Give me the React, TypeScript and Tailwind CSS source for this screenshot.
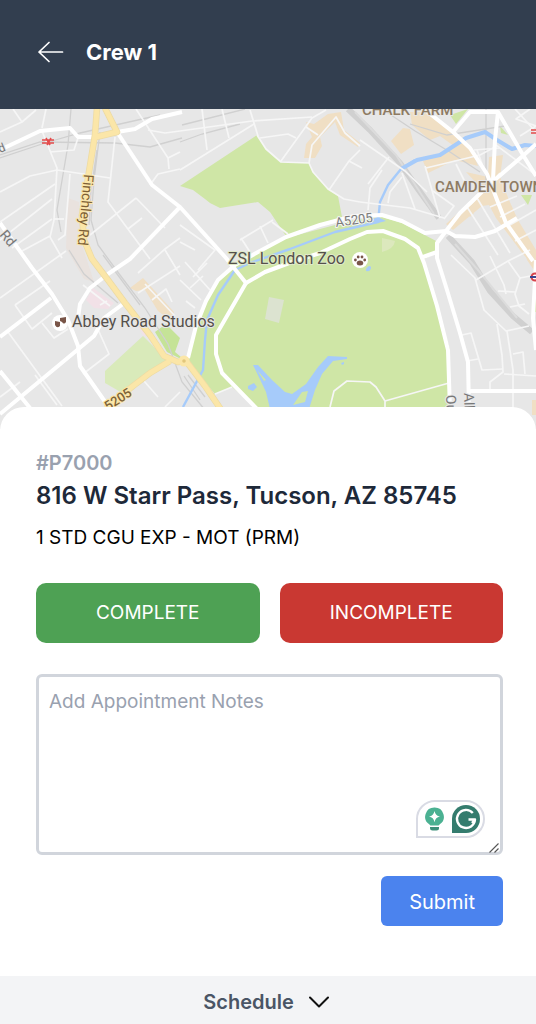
import { useState } from "react";

const minorRoads = [
  "M13 109 L22 122 L0 132", "M22 122 L36 110", "M46 109 L42 128", "M42 131 L57 168 L54 220 L50 237 L62 258",
  "M50 152 L74 150 L78 138", "M0 192 L30 176 L57 170 L110 178", "M0 222 L55 184", "M0 240 L52 199", "M12 248 L52 219",
  "M70 174 L65 235 L58 240", "M54 219 L64 219", "M115 137 L108 202 L150 259", "M90 235 L136 198", "M128 229 L142 218",
  "M136 198 L165 228", "M22 251 L50 236", "M136 109 L168 158 L169 169", "M168 158 L180 152", "M150 185 L158 174 L180 169",
  "M148 130 L165 133 L180 131", "M202 109 L207 150", "M222 109 L229 138", "M180 131 L252 121 L312 117", "M250 110 L258 136",
  "M180 170 L254 124", "M260 138 L288 134 L296 138", "M281 161 L312 118 L326 110", "M257 135 L266 149 L281 162 L309 163 L313 172 L328 189 L344 199 L360 202",
  "M309 163 L312 145 L336 117 L345 133 L360 146", "M306 127 L318 135", "M329 190 L349 161 L360 150", "M349 161 L362 168",
  "M272 222 L288 234", "M240 240 L273 220", "M260 226 L268 243", "M241 238 L250 252", "M180 242 L195 250", "M180 225 L215 250 L198 270",
  "M185 262 L210 290", "M193 277 L207 263", "M180 280 L201 300", "M190 288 L203 276", "M186 301 L195 308",
  "M0 298 L66 251", "M15 305 L50 281", "M15 305 L32 329 L52 313", "M42 323 L54 338 L68 329", "M8 332 L62 406", "M83 285 L110 306",
  "M83 374 L109 354 L96 325", "M100 305 L107 301", "M35 375 L57 405", "M0 397 L20 382", "M138 273 L165 249 L180 238",
  "M138 293 L180 266", "M145 284 L175 316", "M152 300 L166 289 L172 302", "M165 250 L180 275", "M144 381 L158 397", "M165 407 L180 392",
  "M360 140 L405 171 L427 192", "M368 184 L389 157", "M368 210 L370 188 L382 170", "M388 203 L390 192 L402 177", "M402 173 L415 209",
  "M360 202 L410 208 L444 218", "M425 166 L440 218", "M426 168 L480 155 L495 147", "M456 164 L470 192", "M433 191 L454 206 L444 219",
  "M474 150 L500 148", "M477 150 L482 164", "M500 173 L470 205", "M467 207 L498 255", "M477 198 L510 253", "M490 207 L517 196",
  "M500 217 L525 204", "M508 226 L536 210", "M515 241 L536 230", "M496 145 L536 175", "M451 255 L475 278 L484 310 L506 331 L529 326",
  "M476 280 L508 261 L530 250", "M490 256 L504 285 L506 294", "M508 261 L520 278 L515 294 L519 306 L529 314", "M498 291 L515 292",
  "M497 324 L502 355 L503 372 L490 382 L490 390", "M507 331 L513 370 L513 410", "M462 335 L471 333 L482 370 L503 369", "M467 361 L478 359",
  "M504 374 L536 376", "M513 354 L523 352 L525 374", "M510 307 L525 304", "M520 278 L536 275", "M515 109 L536 132", "M520 136 L536 126 L516 119 L530 109",
  "M215 394 L232 387", "M330 407 L334 391 L347 381 L370 382 L376 387 L385 401 L385 410", "M385 401 L449 383",
];

const mainRoads = [
  "M0 150 L40 131 L70 128 L78 137 L95 137", "M117 132 L152 185 L180 207 L226 258 L246 283", "M117 132 L135 129 L152 119 L182 112",
  "M180 207 L130 259 L108 274 L90 288 L80 304 L78 318", "M0 223 L32 268 L52 294 L68 320 L78 346 L80 366 L108 406",
  "M0 337 L51 298", "M0 371 L30 408", "M127 301 L104 318 L94 336 L76 351 L0 414",
  "M188 358 L196 326 L206 301 L218 280 L235 265 L258 252 L286 237 L320 225 L354 216 L382 215 L402 221 L425 233 L446 231",
  "M246 283 L216 335 L216 354 L222 373 L258 410", "M246 283 L265 272 L292 262 L320 253 L350 239 L367 232 L383 231 L405 239 L418 248 L424 263 L437 306 L448 350 L450 410",
  "M423 257 L437 252", "M446 231 L437 243 L437 258 L447 290 L460 333 L468 362 L469 410", "M446 231 L460 213 L490 184 L525 154 L536 144",
  "M446 231 L455 236 L475 237 L495 231 L517 218", "M424 109 L453 132 L470 148 L487 174 L506 223 L533 261", "M453 132 L470 112 L498 112 L495 140 L493 180",
  "M498 112 L523 155 L536 176", "M536 260 L533 318 L536 350", "M469 391 L536 391",
];

const yellowRoads =
  "M97 108 L95 135 L88 178 L82 215 L84 240 L92 259 L108 280 L125 303 L150 335 L164 356 L178 362 L186 361 L205 386 L224 414 M170 361 L150 373 L133 386 L106 408 M105 108 L117 132 L96 137";

function StreetMap() {
  return (
    <svg
      className="block h-full w-full"
      viewBox="0 109 536 320"
      preserveAspectRatio="xMidYMin slice"
      role="img"
      aria-label="Map of the appointment area"
      fontFamily="Roboto, sans-serif"
    >
      <rect x="0" y="109" width="536" height="320" fill="#e7e7e7" />
      <g fill="#f0dfc4">
        <path d="M306 122 L314 124 L328 114 L341 112 L344 130 L360 143 L358 147 L340 135 L335 122 L320 137 L322 146 L315 158 L304 158 L306 144 L312 137 Z" />
        <path d="M403 128 L410 129 L414 145 L401 154 L391 141 Z" />
        <path d="M410 112 L425 112 L447 128 L470 146 L478 166 L455 160 L428 173 L423 161 L446 152 L454 146 L440 136 L430 140 L412 125 Z" />
        <path d="M466 172 L488 177 L489 157 L503 155 L500 177 L509 200 L518 220 L536 250 L536 270 L520 250 L496 218 L489 205 L482 206 L453 230 L446 224 L483 190 Z" />
        <path d="M464 209 L474 213 L470 217 Z M523 243 L532 252 L536 273 L527 260 Z" />
        <path d="M130 288 L143 278 L154 290 L174 312 L170 320 L158 311 L145 290 L136 291 Z" />
        <path d="M532 400 h4 v15 h-4 Z" />
      </g>
      <path d="M68 198 L79 202 L82 245 L94 282 L84 279 L66 248 Z" fill="#e9e2de" />
      <path d="M93 288 L114 303 L108 309 L94 308 L86 300 Z M135 320 L148 332 L144 337 Z" fill="#f2e1e7" />
      <g fill="#cfe6a6">
        <path d="M180 186 L257 135 L266 149 L281 162 L309 163 L313 172 L328 189 L338 196 L342 217 L286 236 L270 212 L258 202 L220 208 L210 203 L205 199 L193 190 Z" />
        <path d="M188 362 L196 326 L206 301 L218 280 L235 265 L258 252 L286 238 L354 220 L382 217 L402 223 L438 242 L435 254 L424 259 L450 350 L450 420 L262 412 L232 387 L215 394 Z" />
        <path d="M450 115 L468 109 L456 124 Z M500 126 L508 135 L501 133 Z M521 195 L532 195 L528 205 Z M535 292 h2 v20 h-2 Z" />
      </g>
      <path d="M105 371 L143 336 L168 361 L140 380 L124 394 L105 383 Z" fill="#d9eaba" />
      <path d="M155 332 L166 324 L180 338 L175 352 L187 362 L167 352 Z" fill="#c5e397" />
      <path d="M269 297 L284 300 L279 323 L265 319 Z" fill="#dce3d0" />
      <path d="M382 238 q10 2 13 3 q-1 8 -13 11 Z" fill="#dce8bd" />

      <g fill="none" stroke="#d0d0d0" strokeWidth="1.3">
        <path d="M71 109 L68 145 L57 210 L61 232 M0 158 L45 143 L80 133 L160 115 M0 155 L40 142 L115 143 L150 147 L182 138 M182 125 L245 109" />
        <path d="M100 132 L94 180 L91 220 L98 245 L120 275 L145 308 L168 344 L182 382 L205 410 M97 150 L91 190 L89 225 M103 255 L140 305" />
        <path d="M382 109 L415 131 L450 152 L480 172 M410 124 L447 135 L505 126 M486 109 L486 190 M180 142 L202 134 L240 124" />
        <path d="M69 250 L84 274 L118 303 M188 375 L205 397 M184 376 L200 400" />
      </g>
      <g fill="none" stroke="#d0d0d0">
        <path strokeWidth="6" d="M348 109 L370 130 L400 163 L418 189 L439 218" />
        <path strokeWidth="6" d="M448 236 L472 262 L490 291 L513 316 L532 332" />
        <path strokeWidth="2" stroke="#dcdcdc" d="M355 112 L396 155 L434 214 M455 244 L478 270 L517 318" />
      </g>

      <g fill="none" stroke="#a6cbfa" strokeLinejoin="round">
        <path strokeWidth="2.4" d="M183 407 L203 370 L205 340 L207 320 L218 295 L235 270 L250 263 L290 249 L335 232 L378 222 L380 202 L388 185 L401 169 L415 160" />
        <path strokeWidth="4" d="M401 169 L417 160 L440 155 L466 138 L485 132 L497 140 L512 149 L525 145 L536 146" />
      </g>
      <g fill="#a6cbfa">
        <path d="M253 365 L258 365 L272 380 L285 392 L292 394 L306 384 L318 367 L328 356 L347 357 L347 359 L333 361 L322 374 L315 390 L309 409 L270 409 L266 392 L256 371 Z" />
        <path d="M248 386 L254 383 L257 387 L253 391 L248 389 Z M341 363 l3 -1 v2 l-2 1 Z M370 220 L378 217 L386 221 L378 223 Z M366 269 q3 -5 5 -2 q0 5 -5 4 Z" />
      </g>
      <path d="M293 405 L302 392 L308 391 L305 402 Z M257 370 L266 380 L264 381 Z" fill="#cfe6a6" />

      <g fill="none" stroke="#f6f6f6" strokeWidth="1.7" strokeLinejoin="round">
        {minorRoads.map((d) => <path key={d} d={d} />)}
      </g>
      <g fill="none" stroke="#ffffff" strokeWidth="4" strokeLinejoin="round">
        {mainRoads.map((d) => <path key={d} d={d} />)}
      </g>
      <path d={yellowRoads} fill="none" strokeLinejoin="round" stroke="#eddba4" strokeWidth="6.5" />
      <path d={yellowRoads} fill="none" strokeLinejoin="round" stroke="#fbe6a8" strokeWidth="5" />
      <circle cx="184" cy="361" r="5.5" fill="#fbe6a8" />
      <circle cx="184" cy="361" r="1.8" fill="#e2c77c" />

      <g stroke="#e7e7e7" strokeWidth="2" paintOrder="stroke" strokeLinejoin="round">
        <text transform="translate(84 174) rotate(95)" fontSize="14" fill="#7d5f35" stroke="#fbe6a8">Finchley Rd</text>
        <text transform="translate(108 411) rotate(-33)" fontSize="13" fontWeight="500" fill="#7d6238" stroke="#fbe6a8">5205</text>
        <text transform="translate(336 227) rotate(-8)" fontSize="13" fill="#7b7b7b" stroke="#f5f5f5">A5205</text>
        <text transform="translate(0 153) rotate(-22)" fontSize="12" fill="#777777">d</text>
        <text transform="translate(-1 235) rotate(50)" fontSize="14" fill="#777777">Rd</text>
        <text transform="translate(446 395) rotate(88)" fontSize="14" fill="#777777">Ou</text>
        <text transform="translate(464 393) rotate(88)" fontSize="14" fill="#777777">Alb</text>
        <text x="362" y="115" fontSize="15" fontWeight="500" fill="#8e7b63">CHALK FARM</text>
        <text x="435" y="192" fontSize="15" fontWeight="500" fill="#8e7b63">CAMDEN TOWN</text>
        <text x="228" y="264" fontSize="16" fill="#55504b" stroke="#dfeac8">ZSL London Zoo</text>
        <text x="72" y="327" fontSize="16" fill="#55504b">Abbey Road Studios</text>
      </g>
      <circle cx="360" cy="260" r="8" fill="#ffffff" />
      <g fill="#795548">
        <ellipse cx="360" cy="263" rx="3.3" ry="2.5" />
        <circle cx="355.4" cy="260" r="1.4" /><circle cx="358.2" cy="257" r="1.4" />
        <circle cx="362" cy="257" r="1.4" /><circle cx="364.7" cy="260" r="1.4" />
      </g>
      <circle cx="60" cy="323" r="8" fill="#ffffff" />
      <path d="M55 321 l5 1 v4 q-3 3 -5 -1 Z M60 318 l6 -1 v5 q-2 3 -4 0 l-2 -1 Z" fill="#795548" />
      <g fill="none" stroke="#e44b4b" strokeWidth="1.6">
        <path d="M42 140 H54 M42 143 H54 M46 138 L50 145 M51 138 L47 145" />
        <path d="M531 130 H540 M531 133 H540" />
      </g>
      <circle cx="535" cy="277" r="3.5" fill="#ffffff" stroke="#d6434b" strokeWidth="2" />
      <path d="M530 277 h10" stroke="#39458f" strokeWidth="2" />
    </svg>
  );
}

function WritingAssistant() {
  return (
    <div className="absolute right-[18px] bottom-[17px] flex h-[38px] w-[69px] items-center gap-2 rounded-full rounded-bl-none border-2 border-[#d9dbe4] bg-white pl-[7px]">
      <svg className="h-6 w-[19px] shrink-0" viewBox="0 0 19 24" aria-hidden="true">
        <path d="M9.5 0.5 A9.2 9.2 0 0 1 14.8 17.3 L13.6 18.5 H5.4 L4.2 17.3 A9.2 9.2 0 0 1 9.5 0.5 Z" fill="#4bb192" />
        <path d="M9.5 4 Q10.4 8.8 15 9.6 Q10.4 10.4 9.5 15.2 Q8.6 10.4 4 9.6 Q8.6 8.8 9.5 4 Z" fill="#ffffff" />
        <path d="M5 20 H14 V21 Q14 23.5 11.5 23.5 H7.5 Q5 23.5 5 21 Z" fill="#3b8f78" />
      </svg>
      <svg className="size-7 shrink-0" viewBox="0 0 28 28" aria-hidden="true">
        <path d="M14 0 A14 14 0 0 1 14 28 H0 V14 A14 14 0 0 1 14 0 Z" fill="#347c6e" />
        <path d="M20.8 8 A9 9 0 1 0 23 14.5 H16.5 M23 14.5 L20 18" fill="none" stroke="#ffffff" strokeWidth="2.4" strokeLinejoin="round" />
      </svg>
    </div>
  );
}

export default function App() {
  const [notes, setNotes] = useState("");

  return (
    <div className="flex min-h-screen flex-col bg-white font-[Inter,sans-serif] text-black">
      <header className="flex items-center gap-[22px] bg-[#323e4f] px-9 pt-[38px] pb-[43px] text-white">
        <button type="button" aria-label="Back" className="flex h-7 w-7 items-center justify-center">
          <svg className="h-[22px] w-7" viewBox="0 0 28 22" fill="none" stroke="currentColor" strokeWidth="1.7" strokeLinecap="round" strokeLinejoin="round" aria-hidden="true">
            <path d="M26.5 11 H3 M13 1.5 L3 11 L13 20.5" />
          </svg>
        </button>
        <h1 className="text-[22px] leading-7 font-bold">Crew 1</h1>
      </header>

      <div className="h-80 overflow-hidden">
        <StreetMap />
      </div>

      <main className="relative -mt-[22px] flex-1 rounded-t-3xl bg-white pt-11 pr-[33px] pb-[50px] pl-9">
        <p className="text-xl leading-6 font-semibold text-gray-400">#P7000</p>
        <h2 className="mt-[5px] text-2xl leading-8 font-semibold text-gray-800">816 W Starr Pass, Tucson, AZ 85745</h2>
        <p className="mt-3 text-[19px] leading-7">1 STD CGU EXP - MOT (PRM)</p>

        <div className="mt-[31px] grid grid-cols-2 gap-5 text-[19px] text-white">
          <button type="button" className="h-[60px] rounded-[10px] bg-[#4ea154] pt-px">COMPLETE</button>
          <button type="button" className="h-[60px] rounded-[10px] bg-[#c93832] pt-px">INCOMPLETE</button>
        </div>

        <form onSubmit={(e) => e.preventDefault()}>
          <div className="relative mt-[31px]">
            <textarea
              aria-label="Appointment notes"
              placeholder="Add Appointment Notes"
              value={notes}
              onChange={(e) => setNotes(e.target.value)}
              className="block h-[181px] w-full resize-none rounded-md border-3 border-gray-300 px-2.5 py-[11px] text-[19px] leading-7 placeholder:text-gray-400"
            />
            <WritingAssistant />
            <svg className="pointer-events-none absolute right-1 bottom-0.5 size-2.5" viewBox="0 0 10 10" stroke="#555555" strokeWidth="1.1" aria-hidden="true">
              <path d="M0.5 9.5 L9.5 0.5 M5.5 9.5 L9.5 5.5" />
            </svg>
          </div>
          <div className="mt-[21px] flex justify-end">
            <button type="submit" className="h-[50px] rounded-md bg-[#4b83ee] px-7 pt-px text-xl text-white">Submit</button>
          </div>
        </form>
      </main>

      <button type="button" className="flex h-12 w-full items-center justify-center gap-[15px] bg-gray-100 pt-1 pr-1">
        <span className="text-xl leading-7 font-semibold text-gray-600">Schedule</span>
        <svg className="h-3 w-5" viewBox="0 0 20 12" fill="none" stroke="#111111" strokeWidth="2" strokeLinecap="round" strokeLinejoin="round" aria-hidden="true">
          <path d="M1 1.5 L10 10.5 L19 1.5" />
        </svg>
      </button>
    </div>
  );
}
